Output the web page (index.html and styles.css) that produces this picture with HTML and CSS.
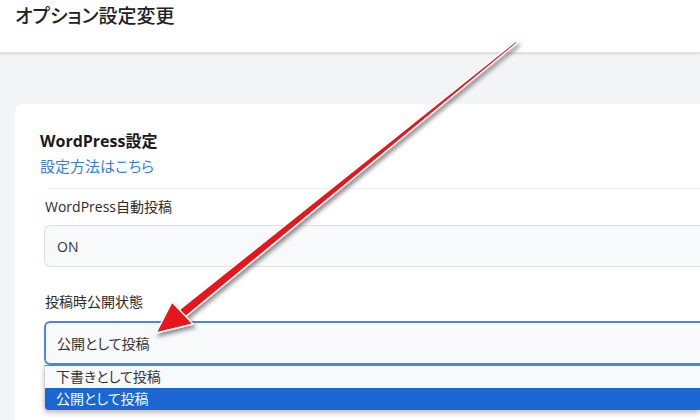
FILE: index.html
```html
<!DOCTYPE html>
<html lang="ja">
<head>
    <meta charset="UTF-8">
    <meta name="viewport" content="width=device-width, initial-scale=1.0">
    <title>オプション設定変更</title>
    <link rel="stylesheet" href="styles.css">
</head>
<body>
    <!-- Header -->
    <header class="top-bar">
        <h1>オプション設定変更</h1>
    </header>

    <!-- Settings -->
    <main class="content">
        <section class="card">
            <h2>WordPress設定</h2>
            <a class="help-link" href="#">設定方法はこちら</a>
            <div class="divider"></div>

            <div class="field">
                <label>WordPress自動投稿</label>
                <div class="input">ON</div>
            </div>

            <div class="field">
                <label>投稿時公開状態</label>
                <div class="input focused">公開として投稿</div>
                <ul class="dropdown">
                    <li>下書きとして投稿</li>
                    <li class="selected">公開として投稿</li>
                </ul>
            </div>
        </section>
    </main>

    <!-- Annotation arrow -->
    <svg class="arrow" width="700" height="420" viewBox="0 0 700 420">
        <defs>
            <filter id="shadow" x="-10%" y="-10%" width="120%" height="120%">
                <feDropShadow dx="2" dy="3" stdDeviation="2" flood-color="#000" flood-opacity="0.45"/>
            </filter>
        </defs>
        <g filter="url(#shadow)">
            <polygon points="516,41 517,43 185,317 179,310" fill="#e8141a" stroke="#fff" stroke-width="1.5" stroke-linejoin="round"/>
            <polygon points="156,333 172,302 193,324" fill="#e8141a" stroke="#fff" stroke-width="1.5" stroke-linejoin="round"/>
        </g>
    </svg>
</body>
</html>
```

FILE: styles.css
```css
body {
    margin: 0;
    font-family: "Open Sans", "Noto Sans CJK JP", sans-serif;
    font-feature-settings: "palt";
    background-color: #f3f4f6;
    color: #222;
    overflow: hidden;
}
.top-bar {
    background-color: #fff;
    height: 53px;
    box-shadow: 0 1px 2px rgba(0, 0, 0, 0.12);
    border-bottom: 1px solid #e4e4e4;
    box-sizing: border-box;
}
.top-bar h1 {
    margin: 0;
    padding: 3px 0 0 15px;
    font-size: 19px;
    font-weight: 500;
    line-height: 26px;
    color: #222;
}
.content {
    padding: 51px 0 0 15px;
}
.card {
    background-color: #fff;
    border-radius: 7px 0 0 0;
    padding: 25px 0 20px 25px;
}
.card h2 {
    margin: 0;
    font-size: 16px;
    font-weight: 700;
    line-height: 24px;
    color: #1a1a1a;
}
.help-link {
    display: block;
    font-size: 15px;
    line-height: 26px;
    color: #3b7ddd;
    text-decoration: none;
}
.divider {
    margin: 9px 0 0 8px;
    border-top: 1px solid #eeeeee;
}
.field {
    padding-left: 4px;
}
.field label {
    display: block;
    margin: 8px 0 8px 1px;
    font-size: 14px;
    line-height: 20px;
    color: #2a2a2a;
}
.field + .field label {
    margin-top: 25px;
    margin-bottom: 9px;
}
.input {
    height: 42px;
    box-sizing: border-box;
    padding: 0 12px;
    display: flex;
    align-items: center;
    font-size: 14px;
    color: #333;
    background-color: #f8f9fa;
    border: 1px solid #dcdfe3;
    border-right: none;
    border-radius: 6px 0 0 6px;
}
.input.focused {
    height: 44px;
    border: 2px solid #4a86e8;
    border-right: none;
    padding-left: 11px;
}
.dropdown {
    list-style: none;
    margin: 0;
    padding: 0;
    background-color: #f8f9fb;
    border-left: 1px solid #d0d4da;
    border-top: 1px solid #4a86e8;
    border-radius: 0 0 0 4px;
    box-shadow: 0 3px 5px rgba(0, 0, 0, 0.25);
    overflow: hidden;
}
.dropdown li {
    height: 22px;
    line-height: 22px;
    padding-left: 11px;
    font-size: 14px;
    color: #333;
}
.dropdown li.selected {
    background-color: #1a66d2;
    color: #fff;
}
.arrow {
    position: absolute;
    left: 0;
    top: 0;
    pointer-events: none;
}
```
